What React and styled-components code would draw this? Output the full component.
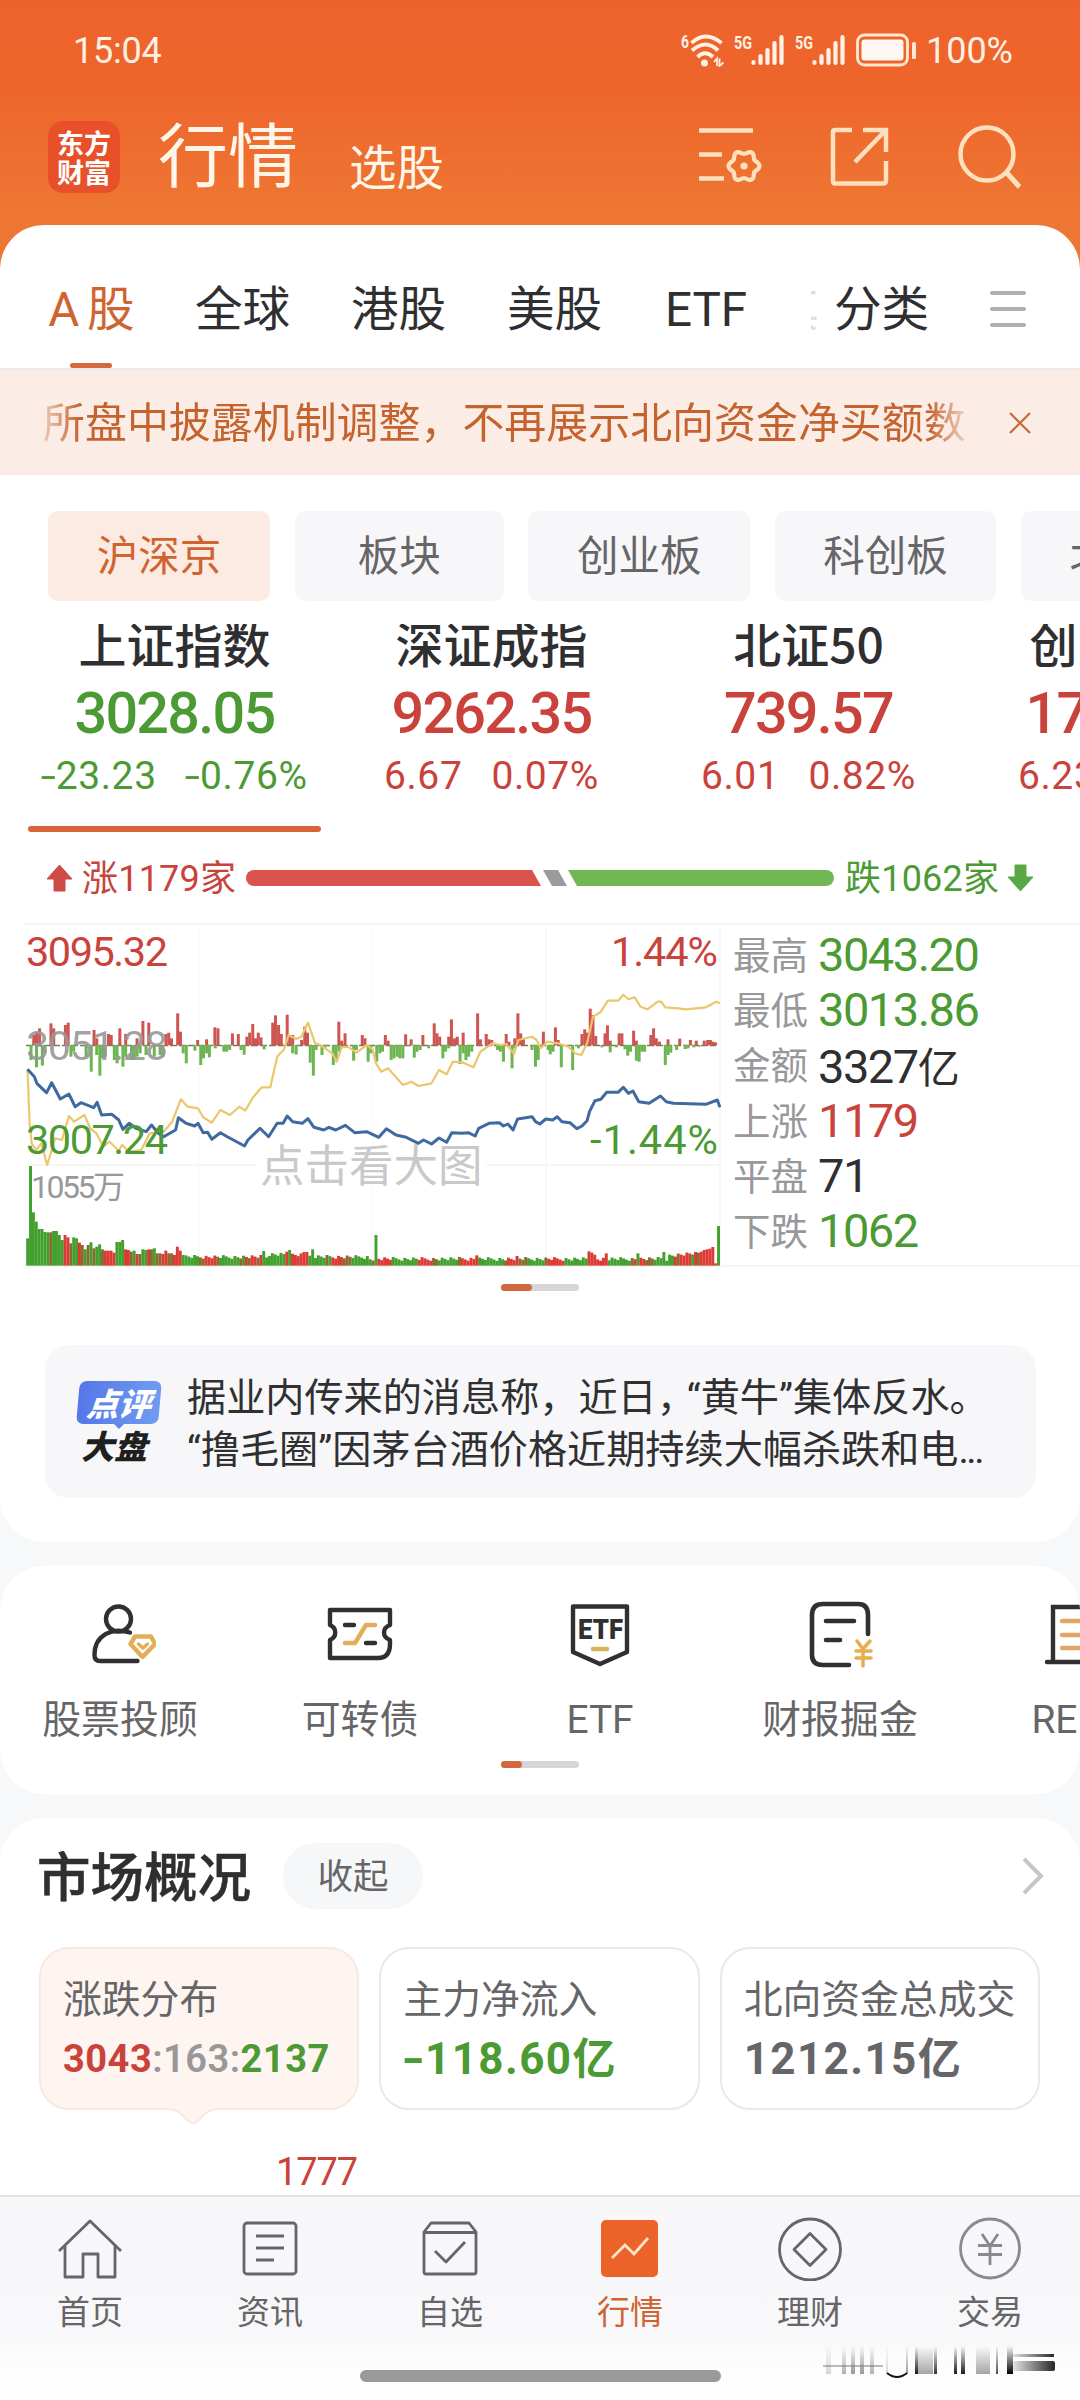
import React from 'react';
import styled, { createGlobalStyle, css } from 'styled-components';

const RED = '#c9423b';
const GREEN = '#4b9a34';
const ORANGE = '#cf6430';
const INK = '#2f2f31';
const GREY = '#666668';

const Global = createGlobalStyle`
  html, body { margin: 0; padding: 0; }
  body {
    width: 1080px; height: 2400px; overflow: hidden;
    font-family: Roboto, 'Noto Sans CJK SC', sans-serif;
    color: ${INK};
  }
  * { box-sizing: border-box; }
`;

const Screen = styled.div`
  width: 1080px;
  height: 2400px;
  overflow: hidden;
  display: flex;
  flex-direction: column;
  background: linear-gradient(#ee632b 0, #ee652c 90px, #ee7733 215px, #ec7630 300px) no-repeat 0 0 / 100% 300px, #f6f8f9;
`;

/* ---------- status bar ---------- */
const StatusBar = styled.div`
  height: 100px;
  flex: none;
  display: flex;
  align-items: center;
  justify-content: space-between;
  padding: 0 67px 0 73px;
  color: #fff1e4;
`;
const Clock = styled.span`
  margin-top: 2px;
  font-size: 36px;
  letter-spacing: -0.2px;
  line-height: 40px;
`;
const StatusRight = styled.div`
  display: flex;
  align-items: center;
  gap: 9px;
`;
const BatteryText = styled(Clock)`
  letter-spacing: 0;
`;

/* ---------- header ---------- */
const Header = styled.header`
  height: 125px;
  flex: none;
  display: flex;
  align-items: center;
  padding: 0 58px 11px 48px;
  color: #fff6ea;
`;
const Logo = styled.div`
  width: 72px;
  height: 72px;
  border-radius: 15px;
  background: #e8502a;
  display: flex;
  flex-direction: column;
  align-items: center;
  justify-content: center;
  font-family: 'Noto Sans CJK SC', sans-serif;
  font-weight: 700;
  font-size: 27px;
  line-height: 29px;
  color: #fff;
`;
const PageTitle = styled.h1`
  margin: 2px 0 0 38px;
  font-weight: 400;
  font-size: 70px;
  line-height: 80px;
`;
const SubTitle = styled.span`
  margin: 24px 0 0 51px;
  font-size: 47.5px;
  line-height: 56px;
`;
const HeaderIcons = styled.div`
  margin-left: auto;
  display: flex;
  align-items: center;
  gap: 66px;
`;
const ShareSlot = styled.div`
  display: flex;
  margin-right: 3px;
`;

/* ---------- panels ---------- */
const Panel = styled.section`
  flex: none;
  height: ${p => p.$h}px;
  border-radius: ${p => (p.$open ? '44px 44px 0 0' : '44px')};
  margin-bottom: ${p => (p.$open ? 0 : 24)}px;
  background: #fff;
  overflow: hidden;
`;

const Tabs = styled.nav`
  height: 145px;
  display: flex;
  padding: 0 54px 0 48px;
  border-bottom: 2px solid #ece9ea;
`;
const Tab = styled.div`
  display: flex;
  flex-direction: column;
  align-items: center;
  width: ${p => p.$w}px;
  margin-right: ${p => p.$gap}px;
  padding-top: 56px;
  font-size: 47.6px;
  line-height: 58px;
  white-space: nowrap;
  color: ${p => (p.$active ? ORANGE : INK)};
  word-spacing: -4px;
`;
const TabMark = styled.i`
  width: 42px;
  height: 6px;
  border-radius: 3px;
  margin: 24px 2px 0 0;
  background: #d5683d;
`;
const TabGhost = styled(Tab)`
  overflow: hidden;
  align-items: flex-end;
  color: #dededf;
`;
const Burger = styled.div`
  width: 36px;
  margin: 66px 0 0 auto;
  display: flex;
  flex-direction: column;
  gap: 12px;
`;
const BurgerLine = styled.i`
  height: 4px;
  border-radius: 2px;
  background: #b1b1b1;
`;

const Notice = styled.div`
  height: 105px;
  background: #fbede5;
  color: #c5632f;
  display: flex;
  align-items: center;
  justify-content: space-between;
  padding: 0 49px 0 43px;
`;
const NoticeText = styled.div`
  margin-top: 3px;
  font-size: 41.95px;
  line-height: 60px;
  white-space: nowrap;
  mask-image: linear-gradient(90deg, rgba(0,0,0,.25), #000 4%, #000 96%, rgba(0,0,0,.2));
`;

const Chips = styled.div`
  display: flex;
  gap: 24.7px;
  padding: 36px 0 23px 48px;
`;
const Chip = styled.div`
  flex: none;
  width: ${p => p.$w}px;
  height: 90px;
  border-radius: 10px;
  font-size: 41.5px;
  line-height: 92px;
  text-align: center;
  background: ${p => (p.$active ? '#fcebe3' : '#f7f7f9')};
  color: ${p => (p.$active ? ORANGE : GREY)};
`;

const IndexStrip = styled.div`
  height: 208px;
  display: flex;
  gap: 24px;
  padding-left: 28px;
  overflow: hidden;
`;
const IndexCol = styled.div`
  flex: none;
  width: 293px;
  display: flex;
  flex-direction: column;
  align-items: center;
  white-space: nowrap;
  color: ${p => p.$c};
`;
const IndexName = styled.div`
  margin-top: -12px;
  font-family: 'Noto Sans CJK SC', sans-serif;
  font-size: 48px;
  font-weight: 500;
  line-height: 60px;
  color: ${INK};
`;
const IndexValue = styled.div`
  margin-top: 10px;
  font-size: 57.5px;
  line-height: 64px;
  font-weight: 500;
  letter-spacing: -1.7px;
`;
const IndexDelta = styled.div`
  margin-top: 8px;
  display: flex;
  gap: 29px;
  font-size: 39px;
  line-height: 44px;
  letter-spacing: 0.6px;
`;
const Minus = styled.span`
  display: inline-block;
  transform: scaleX(1.4);
  margin: 0 1.5px;
`;
const IndexMark = styled.i`
  align-self: stretch;
  height: 6px;
  border-radius: 3px;
  margin-top: auto;
  background: #d8653a;
`;

const Breadth = styled.div`
  height: 91px;
  display: flex;
  align-items: center;
  padding: 0 46px 0 46px;
`;
const BreadthText = styled.span`
  width: 155px;
  margin: 2px ${p => p.$r}px 0 9px;
  font-size: 36px;
  line-height: 44px;
  letter-spacing: 0.2px;
  white-space: nowrap;
  color: ${p => p.$c};
`;

const ChartRow = styled.div`
  height: 344px;
  display: flex;
`;
const Stats = styled.dl`
  flex: 1;
  margin: 0;
  padding: 2px 0 0 12px;
  border-top: 2px solid #f5f5f5;
  border-bottom: 2px solid #f5f5f5;
`;
const Stat = styled.div`
  display: flex;
  align-items: center;
  height: 55.2px;
`;
const StatName = styled.dt`
  width: 85px;
  margin-top: -4px;
  font-size: 37.5px;
  color: #98989a;
`;
const StatValue = styled.dd`
  margin: 0;
  font-size: 47px;
  letter-spacing: -1.5px;
  color: ${p => p.$c};
`;
const Yi = styled.span`
  font-size: ${p => p.$s}px;
`;

const Pager = styled.div`
  width: 78px;
  height: 7px;
  border-radius: 4px;
  margin: ${p => p.$top}px auto 0;
  background: #d6d6d6;
`;
const PagerDot = styled.div`
  width: ${p => p.$w}px;
  height: 7px;
  border-radius: 4px;
  background: #d2683d;
`;

const Comment = styled.div`
  height: 153px;
  margin: 54px 44px 0 45px;
  border-radius: 24px;
  background: #f7f7f9;
  display: flex;
  padding: 27px 0 0 30px;
`;
const Badge = styled.div`
  width: 87px;
  margin: 9px 25px 0 0;
  display: flex;
  flex-direction: column;
  align-items: center;
  font-family: 'Noto Sans CJK SC', sans-serif;
  font-weight: 900;
  font-style: italic;
`;
const BadgeTop = styled.div`
  width: 82px;
  height: 43px;
  border-radius: 7px;
  transform: skewX(-5deg);
  background: linear-gradient(90deg, #5577e8, #6f9cf2);
  color: #fff;
  font-size: 32px;
  line-height: 42px;
  text-align: center;
`;
const BadgeTail = styled.i`
  border: 5px solid transparent;
  border-top-color: #5f86ec;
  border-bottom: 0;
`;
const BadgeBottom = styled.div`
  margin-left: -9px;
  font-size: 33px;
  line-height: 32px;
  color: #1f1f20;
`;
const CommentText = styled.p`
  margin: 0;
  font-size: 39.15px;
  line-height: 52px;
  white-space: nowrap;
  color: #303032;
`;
const Tight = styled.span`
  letter-spacing: ${p => p.$s}px;
`;

/* ---------- shortcuts ---------- */
const Shortcuts = styled.div`
  display: flex;
  padding-top: 31px;
`;
const Shortcut = styled.div`
  flex: none;
  width: 240px;
  display: flex;
  flex-direction: column;
  align-items: center;
  color: ${GREY};
  font-size: 38.9px;
  line-height: 48px;
  gap: 27px;
`;

/* ---------- market overview ---------- */
const OverviewHead = styled.div`
  display: flex;
  align-items: center;
  height: 66px;
  margin: 25px 35px 0 37px;
`;
const OverviewTitle = styled.h2`
  margin: 0;
  font-size: 53.5px;
  line-height: 60px;
  padding-bottom: 4px;
  font-weight: 500;
  font-family: 'Noto Sans CJK SC', sans-serif;
  -webkit-text-stroke: 0.5px ${INK};
`;
const Pill = styled.div`
  width: 140px;
  height: 66px;
  border-radius: 33px;
  margin: 0 auto 0 32px;
  background: #f5f7f8;
  color: ${GREY};
  font-size: 35.5px;
  line-height: 68px;
  text-align: center;
`;
const Cards = styled.div`
  display: flex;
  gap: 20px;
  padding: 38px 40px 0 39px;
`;
const Card = styled.div`
  position: relative;
  flex: 1;
  height: 163px;
  border-radius: 30px;
  padding: 26px 0 0 22px;
  border: 2px solid ${p => (p.$active ? '#f9e9e0' : '#e9e9ea')};
  background: ${p => (p.$active ? '#fef4f0' : '#fff')};
`;
const CardTip = styled.svg`
  position: absolute;
  left: 131px;
  top: 157px;
`;
const CardTitle = styled.div`
  font-size: 38.8px;
  line-height: 50px;
  white-space: nowrap;
  color: ${GREY};
`;
const CardValue = styled.div`
  margin-top: 9px;
  line-height: 50px;
  font-weight: 700;
  font-size: ${p => p.$s}px;
  letter-spacing: ${p => p.$ls}px;
  color: ${p => p.$c};
  white-space: nowrap;
`;
const Part = styled.span`
  color: ${p => p.$c};
  ${p => p.$w && css`font-weight: ${p.$w};`}
`;
const PeakLabel = styled.div`
  margin: 39px 0 0 276px;
  font-size: 38px;
  line-height: 46px;
  letter-spacing: -1.1px;
  color: ${RED};
`;

/* ---------- bottom navigation ---------- */
const BottomNav = styled.nav`
  position: relative;
  flex: none;
  height: 205px;
  border-top: 2px solid #e2e2e3;
  background: linear-gradient(#f7f7fa 0, #f8f8fa 145px, #fdfdfd 165px);
  display: flex;
  flex-direction: column;
`;
const NavRow = styled.div`
  display: flex;
`;
const NavItem = styled.div`
  width: 180px;
  padding-top: 20px;
  display: flex;
  flex-direction: column;
  align-items: center;
  gap: 10px;
  font-size: 33px;
  line-height: 44px;
  color: ${p => (p.$active ? ORANGE : GREY)};
`;
const HomeBar = styled.div`
  width: 361px;
  height: 12px;
  border-radius: 6px;
  margin: 35px auto 0;
  background: #999;
`;
const Stamp = styled.svg`
  position: absolute;
  left: 820px;
  top: 146px;
`;

/* ---------- icons ---------- */
const Signal = () => (
  <svg width="52" height="34" viewBox="0 0 52 34">
    <text x="0" y="16" fontSize="19" fontWeight="700" fill="#fff1e4" textLength="18" lengthAdjust="spacingAndGlyphs">5G</text>
    <g stroke="#fff1e4" strokeWidth="4.2" strokeLinecap="round">
      <path d="M19.500 29V30M26.500 23V30M33.500 17V30M40.500 10V30M47.500 4V30" />
    </g>
  </svg>
);
const Wifi = () => (
  <svg width="44" height="34" viewBox="0 0 44 34">
    <text x="0" y="15" fontSize="19" fontWeight="700" fill="#fff1e4" textLength="8" lengthAdjust="spacingAndGlyphs">6</text>
    <g fill="none" stroke="#fff1e4" strokeWidth="3.9" strokeLinecap="butt">
      <path d="M10.500 10Q24.500-3 40.500 10M11 17.500Q25 5.500 37 17.500M16.500 24Q24 16.500 32 24" />
    </g>
    <circle cx="23.500" cy="30" r="3.500" fill="#fff1e4" />
    <path d="M33 29l3-3.500v7.500M38.500 25.500v7.500l4-3.500" stroke="#fff1e4" strokeWidth="1.800" fill="none" />
  </svg>
);
const Battery = () => (
  <svg width="61" height="34" viewBox="0 0 61 34">
    <rect x="1.500" y="2" width="50" height="30" rx="7" fill="none" stroke="#ffe9d2" strokeWidth="2.800" />
    <rect x="5.500" y="6.500" width="42" height="21" rx="3" fill="#fff7f2" />
    <rect x="56" y="9" width="4" height="17" rx="1.500" fill="#ffe9d2" />
  </svg>
);

const gearPath = (() => {
  const pts = [];
  for (let i = 0; i <= 84; i++) {
    const a = (i / 84) * Math.PI * 2 - Math.PI / 2;
    const r = 13.8 - 1.7 * Math.cos(6 * (a + Math.PI / 2));
    pts.push(`${(45 + r * Math.cos(a)).toFixed(1)} ${(41 + r * Math.sin(a)).toFixed(1)}`);
  }
  return 'M' + pts.join('L') + 'Z';
})();
const ListGearIcon = () => (
  <svg width="64" height="64" viewBox="0 0 64 64" fill="none" stroke="#fde0bd" strokeWidth="4.500">
    <path d="M0 5.500H54M0 29.500H23M0 53.500H25" />
    <path d={gearPath} strokeWidth="4.200" />
    <circle cx="45" cy="41" r="3.600" fill="#fde0bd" stroke="none" />
  </svg>
);
const ShareIcon = () => (
  <svg width="60" height="64" viewBox="0 0 60 64" fill="none" stroke="#fde0bd" strokeWidth="4.500">
    <path d="M23 5H6Q4 5 4 7V56Q4 58.500 6 58.500H54Q57 58.500 57 56V36M34 5H57V27M57 5L26 37" />
  </svg>
);
const SearchIcon = () => (
  <svg width="64" height="66" viewBox="0 0 64 66" fill="none" stroke="#fde0bd" strokeWidth="4.500">
    <circle cx="29" cy="30" r="26.500" />
    <path d="M49 49L61.500 63" strokeWidth="5" />
  </svg>
);
const CloseIcon = () => (
  <svg width="22" height="22" viewBox="0 0 22 22" stroke="#c8683a" strokeWidth="2.200">
    <path d="M1 1L21 21M21 1L1 21" />
  </svg>
);
const ArrowIcon = ({ color, down }) => (
  <svg width="27" height="28" viewBox="0 0 27 28">
    <path d={down ? 'M8 1H19V13H26L13.500 27L1 13H8Z' : 'M8 27H19V15H26L13.500 1L1 15H8Z'} fill={color} stroke={color} strokeLinejoin="round" />
  </svg>
);
const BreadthBar = () => (
  <svg width="590" height="16" viewBox="0 0 590 16">
    <path d="M8 0H286L295 16H8A8 8 0 0 1 8 0Z" fill="#d9534c" />
    <path d="M297 0H312L321 16H306Z" fill="#9b9b9b" />
    <path d="M322 0H580A8 8 0 0 1 580 16H331Z" fill="#71b753" />
  </svg>
);
const AdvisorIcon = () => (
  <svg width="72" height="72" viewBox="0 0 72 72" fill="none" stroke="#303030" strokeWidth="4.400" strokeLinecap="round" strokeLinejoin="round">
    <circle cx="34.500" cy="22" r="12.500" />
    <path d="M46 35.500C28 30 10.500 38 10.500 58Q10.500 64 16 64H53.500" />
    <path d="M51 39.500H67L71 47L58.500 60L46.500 47Z" stroke="#e2ae57" />
    <path d="M54.500 47l4.500 4 4.500-4" stroke="#e2ae57" strokeWidth="3.500" />
  </svg>
);
const BondIcon = () => (
  <svg width="72" height="72" viewBox="0 0 72 72" fill="none" stroke="#303030" strokeWidth="4.400" strokeLinecap="round" strokeLinejoin="round">
    <path d="M6 13H66V28C58 31 58 40 66 43V47Q66 61 54 61H6V43C13 40 13 31 6 28Z" />
    <path d="M21 28H30M42 46H51" />
    <path d="M21 46H31L42 28H51" stroke="#e2ae57" />
  </svg>
);
const EtfIcon = () => (
  <svg width="72" height="72" viewBox="0 0 72 72" fill="none" stroke="#303030" strokeWidth="4.400" strokeLinejoin="round">
    <path d="M9 9.500H63V55L36 67L9 55Z" />
    <text x="14" y="42" fontSize="27" fontWeight="900" fill="#303030" stroke="none" textLength="45" lengthAdjust="spacingAndGlyphs">ETF</text>
    <path d="M29 52H43" stroke="#d9b25c" strokeLinecap="round" />
  </svg>
);
const ReportIcon = () => (
  <svg width="72" height="72" viewBox="0 0 72 72" fill="none" stroke="#303030" strokeWidth="4.600" strokeLinecap="round" strokeLinejoin="round">
    <path d="M64 37V18Q64 7 54 7H19Q8 7 8 18V58Q8 68 19 68H45" />
    <path d="M22 24H50M22 43H36" />
    <path d="M53 44L59 52L66 44M59 52V69M52 54H67M52 61H67" stroke="#e8ad4c" strokeWidth="3.500" />
  </svg>
);
const ReitsIcon = () => (
  <svg width="72" height="72" viewBox="0 0 72 72" fill="none" stroke="#303030" strokeWidth="4.400" strokeLinecap="round">
    <path d="M9 64V10H60V64M3 65H70" />
    <path d="M18 24H50M18 38H50M18 51H50" stroke="#e0a766" />
  </svg>
);
const ChevronIcon = () => (
  <svg width="23" height="38" viewBox="0 0 23 38" fill="none" stroke="#c6c6c6" strokeWidth="4">
    <path d="M2 2L19 19L2 36" />
  </svg>
);

const NavSvg = ({ children }) => (
  <svg width="64" height="64" viewBox="0 0 64 64" fill="none" stroke="#666668" strokeWidth="2.800" strokeLinejoin="round">{children}</svg>
);
const HomeIcon = () => (
  <NavSvg><path d="M1 34L32 4L63 34M7 28V60H25V37H40V60H57V28" /></NavSvg>
);
const NewsIcon = () => (
  <NavSvg><rect x="6" y="6" width="52" height="51" rx="3" /><path d="M18 19H46M18 31H46M18 43H36" /></NavSvg>
);
const WatchIcon = () => (
  <NavSvg><path d="M6 15L13 6H51L58 15V55Q58 57 56 57H8Q6 57 6 55ZM6 15.500H58M17 34L28 45L47 25" /></NavSvg>
);
const MarketIcon = () => (
  <NavSvg><rect x="3" y="3" width="57" height="57" rx="5" fill="#ec632a" stroke="none" /><path d="M14 41L27 28L36 37L50 21" stroke="#ffe6cf" strokeLinejoin="miter" /></NavSvg>
);
const WealthIcon = () => (
  <NavSvg><circle cx="32" cy="32.500" r="30.500" /><path d="M32 16.500L48 32.500L32 48.500L16 32.500Z" /></NavSvg>
);
const TradeIcon = () => (
  <NavSvg><g stroke="#8a8a8c"><circle cx="32" cy="31.500" r="29.500" /><path d="M24 17L32 29L40 17M32 29V48M20 28.500H44M20 37.500H44" /></g></NavSvg>
);

/* ---------- intraday chart ---------- */
const X = v => v / 2.904;
const Y = v => v / 3 - 13;
const line = pts => pts.map(([x, y]) => `${X(x).toFixed(1)},${Y(y).toFixed(1)}`).join(' ');

const PRICE = [[80,478],[100,500],[107,520],[135,548],[150,518],[175,567],[200,552],[218,590],[235,578],[272,593],[282,577],[295,615],[325,613],[345,630],[357,658],[375,640],[395,655],[425,665],[440,645],[460,670],[475,680],[510,660],[518,623],[540,640],[565,648],[575,640],[590,668],[603,667],[615,688],[640,668],[660,680],[710,708],[720,690],[755,655],[780,680],[805,640],[822,640],[834,618],[850,635],[878,640],[894,626],[912,652],[940,660],[955,652],[975,660],[1003,646],[1030,668],[1065,665],[1100,682],[1122,656],[1150,675],[1180,682],[1215,700],[1230,690],[1253,702],[1275,684],[1297,697],[1312,668],[1340,670],[1360,668],[1380,678],[1390,655],[1420,640],[1450,638],[1462,648],[1475,642],[1490,660],[1503,627],[1545,620],[1555,635],[1568,642],[1585,627],[1605,630],[1618,620],[1632,635],[1655,638],[1675,656],[1690,648],[1705,632],[1712,605],[1728,572],[1745,568],[1762,547],[1795,547],[1810,532],[1825,550],[1838,543],[1855,575],[1885,580],[1918,558],[1935,575],[1955,580],[2050,583],[2083,570],[2091,592]];
const LEAD = [[80,478],[86,640],[92,700],[105,720],[120,700],[137,765],[150,720],[160,685],[180,690],[200,618],[215,635],[245,615],[262,655],[280,670],[300,710],[318,695],[345,722],[355,705],[375,725],[410,720],[435,670],[475,665],[500,635],[525,568],[545,590],[575,595],[590,622],[615,638],[640,600],[668,615],[695,590],[712,602],[735,562],[760,532],[785,532],[805,440],[825,418],[838,375],[860,387],[875,380],[894,338],[915,400],[930,405],[965,430],[978,455],[992,412],[1010,410],[1035,428],[1065,405],[1082,418],[1092,460],[1107,485],[1127,475],[1170,525],[1195,515],[1215,528],[1253,520],[1275,480],[1297,493],[1315,455],[1345,458],[1375,472],[1395,425],[1430,400],[1455,405],[1470,402],[1493,432],[1505,390],[1545,380],[1558,390],[1570,415],[1590,395],[1620,400],[1650,410],[1670,430],[1688,435],[1705,400],[1722,320],[1745,305],[1765,272],[1795,272],[1810,254],[1825,268],[1843,262],[1860,290],[1880,298],[1910,275],[1920,275],[1932,292],[1970,295],[1990,298],[2050,292],[2080,275],[2091,280]];
const UPS = [[98,375],[106,365],[115,355],[148,340],[156,355],[190,345],[198,338],[273,360],[281,385],[315,372],[323,375],[348,355],[365,372],[398,385],[415,333],[432,338],[482,372],[490,368],[498,385],[516,310],[524,365],[574,390],[600,388],[624,352],[633,355],[675,370],[692,372],[717,380],[725,368],[734,342],[742,385],[750,368],[758,382],[792,338],[800,316],[809,345],[817,372],[834,314],[842,378],[850,375],[876,390],[885,350],[893,368],[984,335],[992,392],[1002,370],[1052,375],[1060,385],[1119,375],[1127,392],[1178,373],[1194,388],[1228,375],[1261,340],[1269,370],[1277,380],[1303,380],[1311,328],[1320,385],[1328,380],[1345,368],[1387,310],[1395,388],[1412,372],[1420,388],[1428,390],[1470,372],[1478,395],[1495,385],[1504,310],[1512,370],[1520,385],[1578,365],[1613,352],[1621,390],[1690,372],[1698,358],[1706,368],[1714,296],[1722,315],[1730,378],[1757,370],[1764,346],[1772,392],[1798,370],[1806,370],[1840,362],[1848,392],[1890,375],[1898,355],[1906,385],[1915,395],[1940,388],[1974,386],[2005,390],[2022,392],[2045,392],[2055,390],[2063,390],[2070,395],[2078,397]];
const DOWNS = [[90,450],[106,472],[123,467],[131,430],[206,440],[214,425],[250,440],[265,485],[281,435],[290,497],[298,445],[306,440],[332,450],[340,460],[357,470],[365,440],[382,450],[390,450],[398,440],[407,430],[424,435],[448,440],[465,435],[473,440],[532,430],[541,460],[566,422],[583,465],[591,445],[600,430],[608,442],[625,415],[650,425],[658,425],[667,420],[700,420],[709,434],[767,418],[850,430],[860,434],[901,458],[910,497],[918,420],[935,435],[943,415],[968,465],[976,450],[985,425],[1027,452],[1035,420],[1069,455],[1077,430],[1094,455],[1103,430],[1111,425],[1136,450],[1144,445],[1153,440],[1161,445],[1170,445],[1203,443],[1211,425],[1220,420],[1245,415],[1286,445],[1294,425],[1303,415],[1336,462],[1345,430],[1353,450],[1361,440],[1370,425],[1445,420],[1453,425],[1462,455],[1487,475],[1495,415],[1545,420],[1555,470],[1563,450],[1592,420],[1598,433],[1606,425],[1630,472],[1663,480],[1680,415],[1748,412],[1772,427],[1790,412],[1815,418],[1823,437],[1831,425],[1848,452],[1856,455],[1864,425],[1872,425],[1932,465],[1940,435],[1948,428],[1965,420],[1990,417],[1998,415],[2015,412],[2030,410]];

const OPENING = [985,768,907,935,957,957,966,967,967,963,963,975,990,975,982,1000,982,985,998,1005,1018,1005,997,1015,1010,1003,1018,1022,1022,1022,1028,996,996,990,1018,1020,1025,1022,1032,1032,1018,1020,1018,1018,1015,1030,1030,1032,1022,1030,1030,1035,1010,1022,1035];
const OPEN_COL = 'GGGGGGGGBGGGGRRBGGRBGBGBGGBRRRRGGGRRBGRBGGRBGBBRRBBRRRG';
const SPIKES = { 82: [1023, 'G'], 90: [1025, 'R'], 91: [1020, 'G'], 96: [1026, 'R'], 97: [1026, 'R'], 99: [1018, 'G'], 121: [975, 'G'], 156: [1036, 'R'], 170: [1038, 'R'], 195: [1024, 'R'], 196: [1028, 'R'], 197: [1034, 'R'], 201: [1030, 'R'], 212: [1030, 'G'], 221: [1026, 'G'], 232: [1026, 'R'], 233: [1028, 'B'], 234: [1025, 'R'], 235: [1020, 'R'], 236: [1018, 'R'], 237: [1016, 'R'], 238: [1011, 'R'], 239: [1060, 'R'], 240: [948, 'G'] };
const FILL = { R: '#dc3a34', G: '#43a02e', B: '#8a6a30' };
const VOLUME = Array.from({ length: 241 }, (_, i) => {
  const x = 76 + i * 8.36;
  if (SPIKES[i]) return [x, SPIKES[i][0], SPIKES[i][1]];
  if (i < OPENING.length) return [x, OPENING[i], OPEN_COL[i]];
  const n = ((i * 7919 + 31) % 23) / 23;
  const base = i > 222 ? 1040 - (i - 222) * 0.7 : i > 118 ? 1049 : 1043;
  const mode = Math.sin(i * 0.42) + ((i * 37) % 11) / 11 - 0.5;
  return [x, base - 8 + n * 12 - (i >= 84 && i < 98 ? 8 : 0), mode > 0.45 ? 'R' : mode > 0 ? 'B' : 'G'];
});

const Chart = () => (
  <svg width="721" height="344" viewBox="0 0 721 344" fontSize="41.500">
    <path d="M24 1H721M27 242H720M27 343.500H720" stroke="#f4f4f4" strokeWidth="1.600" />
    <path d="M198.500 1V343M372.500 1V343M546 1V343M720 1V343" stroke="#f8f8f8" strokeWidth="1.600" />
    <path d="M26 122.500H716" stroke="#7a7a55" strokeWidth="1.300" strokeDasharray="7 2" />
    {UPS.map(([x, y]) => <rect key={x} x={X(x) - 1.5} y={Y(y)} width="3" height={Y(406) - Y(y)} fill="#cf5552" />)}
    {DOWNS.map(([x, y]) => <rect key={x} x={X(x) - 1.5} y={Y(405)} width="3" height={Y(y) - Y(405)} fill="#6cb552" />)}
    {VOLUME.map(([x, y, c], i) => <rect key={i} x={X(x)} y={Y(y)} width="2.95" height={Y(1067) - Y(y)} fill={FILL[c]} />)}
    <rect x="256" y="226" width="230" height="40" fill="#fff" />
    <text x="260" y="259" fontSize="44.500" fill="#c9c9ca">点击看大图</text>
    <polyline points={line(LEAD)} fill="none" stroke="#ecc66c" strokeWidth="2.200" strokeLinejoin="round" />
    <polyline points={line(PRICE)} fill="none" stroke="#40699f" strokeWidth="3" strokeLinejoin="round" />
    <text x="26" y="43" fill={RED} textLength="142">3095.32</text>
    <text x="611" y="43" fill={RED} textLength="107">1.44%</text>
    <text x="26" y="137" fill="#98989a" textLength="142" opacity=".9">3051.28</text>
    <text x="26" y="231" fill={GREEN} textLength="142">3007.24</text>
    <text x="590" y="231" fill={GREEN} textLength="128">-1.44%</text>
    <text x="31" y="275" fill="#98989a" fontSize="32" textLength="94">1055万</text>
  </svg>
);

/* ---------- page data ---------- */
const TABS = [
  { t: 'A 股', w: 87, gap: 60, active: true },
  { t: '全球', w: 95, gap: 61 },
  { t: '港股', w: 95, gap: 61 },
  { t: '美股', w: 95, gap: 61 },
  { t: 'ETF', w: 86, gap: 62 },
];
const CHIPS = [['沪深京', 222], ['板块', 209], ['创业板', 222], ['科创板', 221], ['北交所', 222]];
const INDEXES = [
  { n: '上证指数', v: '3028.05', d: '-23.23', p: '-0.76%', c: GREEN },
  { n: '深证成指', v: '9262.35', d: '6.67', p: '0.07%', c: RED },
  { n: '北证50', v: '739.57', d: '6.01', p: '0.82%', c: RED },
  { n: '创业板指', v: '1787.45', d: '6.23', p: '0.35%', c: RED },
];
const STATS = [['最高', '3043.20', GREEN], ['最低', '3013.86', GREEN], ['金额', '3327', INK, '亿'], ['上涨', '1179', RED], ['平盘', '71', INK], ['下跌', '1062', GREEN]];
const SHORTCUTS = [['股票投顾', AdvisorIcon], ['可转债', BondIcon], ['ETF', EtfIcon], ['财报掘金', ReportIcon], ['REITs', ReitsIcon]];
const NAV = [['首页', HomeIcon], ['资讯', NewsIcon], ['自选', WatchIcon], ['行情', MarketIcon], ['理财', WealthIcon], ['交易', TradeIcon]];
const STAMP_BARS = [[6, 5, 0.15], [22, 4, 0.3], [31, 4, 0.4], [40, 4, 0.4], [50, 4, 0.3], [66, 2, 0.15], [86, 2, 0.4], [95, 3, 0.9], [98, 15, 0.35], [114, 3, 0.8], [134, 3, 0.9], [141, 4, 0.9], [156, 14, 0.35], [176, 2, 0.7], [187, 6, 1]];

const Signed = ({ value }) => (
  <span>{value[0] === '-' ? <><Minus>-</Minus>{value.slice(1)}</> : value}</span>
);

export default function App() {
  return (
    <Screen lang="zh-CN">
      <Global />
      <StatusBar>
        <Clock>15:04</Clock>
        <StatusRight>
          <Wifi /><Signal /><Signal /><Battery />
          <BatteryText>100%</BatteryText>
        </StatusRight>
      </StatusBar>

      <Header>
        <Logo><span>东方</span><span>财富</span></Logo>
        <PageTitle>行情</PageTitle>
        <SubTitle>选股</SubTitle>
        <HeaderIcons><ListGearIcon /><ShareSlot><ShareIcon /></ShareSlot><SearchIcon /></HeaderIcons>
      </Header>

      <Panel $h={1317}>
        <Tabs>
          {TABS.map(t => (
            <Tab key={t.t} $w={t.w} $gap={t.gap} $active={t.active}>
              {t.t}
              {t.active && <TabMark />}
            </Tab>
          ))}
          <TabGhost $w={8} $gap={15}>其</TabGhost>
          <Tab $w={95} $gap={0}>分类</Tab>
          <Burger><BurgerLine /><BurgerLine /><BurgerLine /></Burger>
        </Tabs>
        <Notice>
          <NoticeText>所盘中披露机制调整，不再展示北向资金净买额数</NoticeText>
          <CloseIcon />
        </Notice>
        <Chips>
          {CHIPS.map(([t, w], i) => <Chip key={t} $w={w} $active={i === 0}>{t}</Chip>)}
        </Chips>
        <IndexStrip>
          {INDEXES.map((x, i) => (
            <IndexCol key={x.n} $c={x.c}>
              <IndexName>{x.n}</IndexName>
              <IndexValue>{x.v}</IndexValue>
              <IndexDelta><Signed value={x.d} /><Signed value={x.p} /></IndexDelta>
              {i === 0 && <IndexMark />}
            </IndexCol>
          ))}
        </IndexStrip>
        <Breadth>
          <ArrowIcon color="#cf4b45" />
          <BreadthText $c={RED} $r={9}>涨1179家</BreadthText>
          <BreadthBar />
          <BreadthText $c={GREEN} $r={7}>跌1062家</BreadthText>
          <ArrowIcon color="#5aa845" down />
        </Breadth>
        <ChartRow>
          <Chart />
          <Stats>
            {STATS.map(([n, v, c, unit]) => (
              <Stat key={n}>
                <StatName>{n}</StatName>
                <StatValue $c={c}>{v}{unit && <Yi $s={42}>{unit}</Yi>}</StatValue>
              </Stat>
            ))}
          </Stats>
        </ChartRow>
        <Pager $top={17}><PagerDot $w={31} /></Pager>
        <Comment>
          <Badge>
            <BadgeTop>点评</BadgeTop>
            <BadgeTail />
            <BadgeBottom>大盘</BadgeBottom>
          </Badge>
          <CommentText>
            据业内传来的消息称，近日<Tight $s={-9}>，</Tight>“黄牛”集体反水。<br />
            “撸毛圈”因茅台酒价格近期持续大幅杀跌和电<Tight $s={-2.5}>...</Tight>
          </CommentText>
        </Comment>
      </Panel>

      <Panel $h={228}>
        <Shortcuts>
          {SHORTCUTS.map(([t, Icon]) => <Shortcut key={t}><Icon />{t}</Shortcut>)}
        </Shortcuts>
        <Pager $top={17}><PagerDot $w={21} /></Pager>
      </Panel>

      <Panel $h={377} $open>
        <OverviewHead>
          <OverviewTitle>市场概况</OverviewTitle>
          <Pill>收起</Pill>
          <ChevronIcon />
        </OverviewHead>
        <Cards>
          <Card $active>
            <CardTitle>涨跌分布</CardTitle>
            <CardValue $s={38} $ls={0.5}>
              <Part $c={RED}>3043</Part><Part $c="#98989a" $w={600}>:163:</Part><Part $c={GREEN}>2137</Part>
            </CardValue>
            <CardTip width="42" height="20" viewBox="0 0 42 20">
              <path d="M0 3L1 3Q6 4 9 8L17 15Q21 18 25 15L33 8Q36 4 42 3V0H0Z" fill="#fef4f0" />
              <path d="M0 4Q5 4 9 8L17 15.500Q21 19 25 15.500L33 8Q37 4 42 4" fill="none" stroke="#f9e9e0" strokeWidth="2" />
            </CardTip>
          </Card>
          <Card>
            <CardTitle>主力净流入</CardTitle>
            <CardValue $s={44} $ls={1.4} $c={GREEN}><Minus>-</Minus>118.60<Yi $s={43}>亿</Yi></CardValue>
          </Card>
          <Card>
            <CardTitle>北向资金总成交</CardTitle>
            <CardValue $s={44} $ls={1.4} $c={GREY}>1212.15<Yi $s={43}>亿</Yi></CardValue>
          </Card>
        </Cards>
        <PeakLabel>1777</PeakLabel>
      </Panel>

      <BottomNav>
        <NavRow>
          {NAV.map(([t, Icon]) => <NavItem key={t} $active={t === '行情'}><Icon />{t}</NavItem>)}
        </NavRow>
        <HomeBar />
        <Stamp width="240" height="38" viewBox="0 0 240 38">
          <defs>
            <linearGradient id="fadeDown" x1="0" y1="0" x2="0" y2="1">
              <stop offset="0" stopColor="#000" stopOpacity="0" />
              <stop offset="1" stopColor="#000" stopOpacity="1" />
            </linearGradient>
            <linearGradient id="fadeRight" x1="0" y1="0" x2="1" y2="0">
              <stop offset="0" stopColor="#000" stopOpacity="0.1" />
              <stop offset="1" stopColor="#000" stopOpacity="0.85" />
            </linearGradient>
          </defs>
          {STAMP_BARS.map(([x, w, o]) => <rect key={x} x={x} y="3" width={w} height="28" fill="url(#fadeDown)" opacity={o} />)}
          <path d="M67 30Q77 38 87 30" fill="none" stroke="#111" strokeWidth="2" />
          <rect x="3" y="22" width="60" height="2" fill="#777" opacity=".5" />
          <rect x="193" y="11" width="41" height="3" fill="url(#fadeRight)" />
          <rect x="193" y="18" width="42" height="10" rx="2" fill="url(#fadeRight)" />
        </Stamp>
      </BottomNav>
    </Screen>
  );
}
